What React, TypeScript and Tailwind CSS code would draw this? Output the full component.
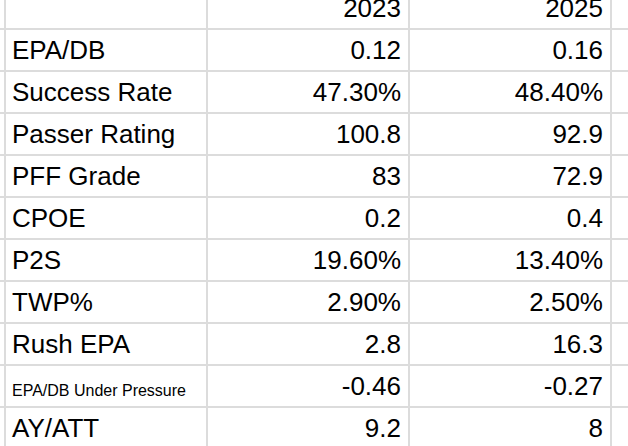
import * as React from "react";

type Row = { label: string; a: string; b: string; small?: boolean };

const rows: Row[] = [
  { label: "EPA/DB", a: "0.12", b: "0.16" },
  { label: "Success Rate", a: "47.30%", b: "48.40%" },
  { label: "Passer Rating", a: "100.8", b: "92.9" },
  { label: "PFF Grade", a: "83", b: "72.9" },
  { label: "CPOE", a: "0.2", b: "0.4" },
  { label: "P2S", a: "19.60%", b: "13.40%" },
  { label: "TWP%", a: "2.90%", b: "2.50%" },
  { label: "Rush EPA", a: "2.8", b: "16.3" },
  { label: "EPA/DB Under Pressure", a: "-0.46", b: "-0.27", small: true },
  { label: "AY/ATT", a: "9.2", b: "8" },
];

function Cell({ children, right, small }: { children?: React.ReactNode; right?: boolean; small?: boolean }) {
  return (
    <div
      className={`bg-white flex items-end overflow-hidden whitespace-nowrap leading-none ${
        right ? "justify-end pr-[7px]" : "pl-[6px]"
      } ${small ? "text-[16px] pb-[7px]" : "text-[26px] pb-[7px]"}`}
    >
      {children}
    </div>
  );
}

export default function App() {
  return (
    <div
      className="w-[628px] h-[446px] overflow-hidden bg-[#dcdcdc] text-black"
      style={{ fontFamily: '"Liberation Sans", Arial, Helvetica, sans-serif' }}
    >
      <div className="grid grid-cols-[4px_200px_200px_200px_1fr] grid-rows-[28px] auto-rows-[40px] gap-[2px]">
        <div className="bg-white" />
        <div className="bg-white" />
        <div className="bg-white flex items-end justify-end pr-[7px] pb-[7px] text-[26px] leading-none">2023</div>
        <div className="bg-white flex items-end justify-end pr-[7px] pb-[7px] text-[26px] leading-none">2025</div>
        <div className="bg-white" />

        {rows.map((r) => (
          <React.Fragment key={r.label}>
            <div className="bg-white" />
            <Cell small={r.small}>{r.label}</Cell>
            <Cell right>{r.a}</Cell>
            <Cell right>{r.b}</Cell>
            <div className="bg-white" />
          </React.Fragment>
        ))}
      </div>
    </div>
  );
}
